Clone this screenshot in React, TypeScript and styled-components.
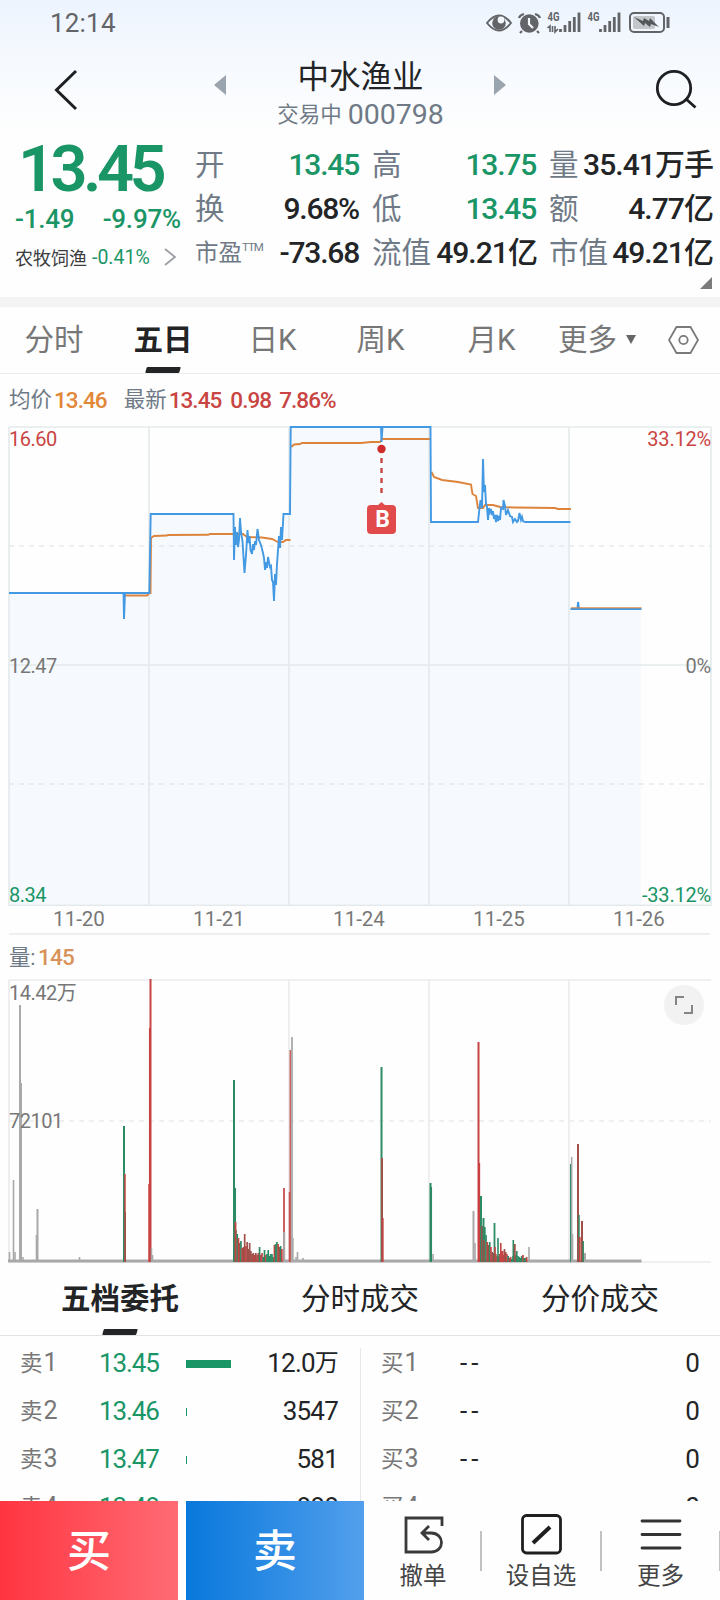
import React from 'react';
import styled, { createGlobalStyle } from 'styled-components';

const GREEN = '#1a9566';
const RED = '#c94543';
const INK = '#222426';
const SLATE = '#6f7a86';
const GREY = '#777777';

const Global = createGlobalStyle`
  * { box-sizing: border-box; }
  html, body { margin: 0; padding: 0; background: #fff; }
  body { width: 720px; height: 1600px; overflow: hidden; font-family: Roboto, "Noto Sans CJK SC", sans-serif; color: ${INK}; }
  svg { display: block; }
`;

const Screen = styled.div`
  width: 720px; height: 1600px; overflow: hidden; background: #fefefe;
  display: flex; flex-direction: column;
`;
const Top = styled.header`
  height: 137px; flex: none; display: flex; flex-direction: column;
  background: linear-gradient(#edf4fe, #f5f9fe 40%, #fefefe);
`;
const StatusBar = styled.div`
  height: 46px; padding: 0 49px 0 50px; display: flex; align-items: center; justify-content: space-between;
`;
const Clock = styled.span`font-size: 26px; line-height: 44px; letter-spacing: 0.2px; color: #626468;`;
const TitleBar = styled.div`
  height: 91px; display: flex; padding: 0 22px 0 54px;
`;
const TitleGroup = styled.div`display: flex; margin-left: 136px; flex: 1;`;
const TitleText = styled.div`
  width: 268px; display: flex; flex-direction: column; align-items: center; padding-left: 1px;
`;
const StockName = styled.h1`
  margin: 12px 0 0; font-size: 31.5px; line-height: 40px; font-weight: 400; white-space: nowrap;
`;
const StockCode = styled.div`
  display: flex; align-items: center; gap: 6px; height: 32px; margin-top: 1px; color: ${SLATE}; white-space: nowrap;
  small { font-size: 21.5px; line-height: 34px; }
  span { font-size: 28.5px; line-height: 32px; }
`;

const Quote = styled.section`
  height: 160px; flex: none; display: flex; padding: 0 7px 0 15px; white-space: nowrap;
`;
const PriceCol = styled.div`width: 180px; color: ${GREEN}; font-weight: 500;`;
const BigPrice = styled.div`
  font-size: 65px; line-height: 64px; font-weight: 600; letter-spacing: -4.6px; height: 65px; padding-left: 3px;
`;
const ChangeRow = styled.div`
  height: 35px; display: flex; width: 166px; justify-content: space-between; font-size: 26px; line-height: 34px;
  letter-spacing: -0.2px;
`;
const Sector = styled.div`
  height: 40px; display: flex; align-items: center; font-size: 18px; color: #3a3c3e; font-weight: 400;
  em { font-style: normal; color: ${GREEN}; font-size: 19.5px; margin: 0 13px 0 5px; }
`;
const Stats = styled.div`
  flex: 1; display: grid; grid-template-columns: 165px 165px 164px; column-gap: 12px;
  grid-template-rows: 44px 44px 44px 18px; padding-top: 6px;
`;
const Stat = styled.div`display: flex; justify-content: space-between; align-items: center;`;
const StatLabel = styled.span<{ $small?: boolean }>`
  font-size: ${p => (p.$small ? 23.5 : 29.5)}px; line-height: 44px; color: ${SLATE}; display: flex;
  sup { font-size: 11.5px; line-height: 32px; vertical-align: top; letter-spacing: -1px; }
`;
const StatValue = styled.span<{ $green?: boolean; $han?: boolean }>`
  font-size: 30px; line-height: 44px; font-weight: 500; letter-spacing: ${p => (p.$han ? -0.95 : -1.2)}px;
  color: ${p => (p.$green ? GREEN : INK)}; padding-right: ${p => (p.$han ? 0 : 1)}px;
`;
const Corner = styled.div`grid-column: 3; display: flex; justify-content: flex-end; padding: 2px 1px 0 0;`;
const Band = styled.div`height: 10px; flex: none; background: #f4f4f4;`;

const Tabs = styled.nav`
  height: 67px; flex: none; display: flex; border-bottom: 1px solid #ececec; white-space: nowrap;
`;
const Tab = styled.div<{ $active?: boolean; $w: number }>`
  width: ${p => p.$w}px; height: 67px; display: flex; flex-direction: column; align-items: center;
  font-size: 29.5px; line-height: 67px; color: ${p => (p.$active ? INK : GREY)};
  font-weight: ${p => (p.$active ? 700 : 400)};
`;
const Marker = styled.i`
  width: 34px; height: 6px; border-radius: 1px; background: ${INK}; transform: skewX(-16deg); margin-top: -7px;
`;
const MoreTab = styled.div`
  flex: none; width: 110px; margin-left: 9px; display: flex; align-items: center; gap: 9px;
  font-size: 29.5px; line-height: 67px; color: ${GREY}; height: 67px;
  svg { margin-top: -3px; }
`;
const HexSlot = styled.div`height: 65px; display: flex; align-items: center;`;

const Legend = styled.div`
  height: 52px; flex: none; display: flex; align-items: center; padding: 0 0 0 9px; white-space: nowrap;
`;
const LegendKey = styled.span`font-size: 21.5px; line-height: 52px; color: ${SLATE};`;
const LegendNum = styled.span<{ $c: string; $gap: number }>`
  font-size: 22.5px; line-height: 50px; font-weight: 500; letter-spacing: -0.95px; color: ${p => p.$c};
  margin-right: ${p => p.$gap}px; margin-left: 2px;
`;

const Plot = styled.div<{ $h: number }>`
  position: relative; height: ${p => p.$h}px; flex: none;
`;
const AxisText = styled.span<{ $y: number; $right?: boolean; $c?: string }>`
  position: absolute; top: ${p => p.$y}px; ${p => (p.$right ? 'right: 9px;' : 'left: 9px;')}
  font-size: 20px; line-height: 24px; letter-spacing: ${p => (p.$right ? -0.2 : -0.5)}px; color: ${p => p.$c || GREY};
`;
const BuyPin = styled.div`
  position: absolute; left: 367px; top: 79px; width: 29px; height: 29px; border-radius: 4px;
  background: #e14b4b; color: #fff; font-size: 23px; line-height: 30px; font-weight: 700; text-align: center; padding-left: 2px;
`;
const Dates = styled.div`
  height: 29px; flex: none; margin: 0 10px 0 9px; display: grid; grid-template-columns: repeat(5, 140px);
  border-bottom: 2px solid #eef0f0; font-size: 20.5px; line-height: 27px; color: ${GREY}; text-align: center;
`;
const VolLegend = styled.div`
  height: 44px; flex: none; display: flex; padding-left: 9px; line-height: 45px; font-size: 21.5px; color: ${SLATE};
  letter-spacing: -0.3px;
  b { font-size: 22.5px; font-weight: 500; color: #d8925a; letter-spacing: -0.9px; margin-left: 3px; }
`;
const Expand = styled.button`
  position: absolute; left: 664px; top: 6px; width: 40px; height: 40px; border: 0; border-radius: 50%;
  padding: 0; background: #f2f2f2; display: flex; align-items: center; justify-content: center;
`;

const DepthTabs = styled.nav`
  height: 73px; flex: none; display: grid; grid-template-columns: repeat(3, 240px); border-bottom: 1px solid #e2e2e2;
`;
const DepthTab = styled.div<{ $active?: boolean }>`
  display: flex; flex-direction: column; align-items: center; font-size: 29.5px; line-height: 73px; height: 73px;
  font-weight: ${p => (p.$active ? 700 : 400)}; color: ${INK};
`;
const Book = styled.section`
  height: 165px; flex: none; display: flex; overflow: hidden; padding-top: 3px;
`;
const Side = styled.div<{ $buy?: boolean }>`
  width: 360px; padding: ${p => (p.$buy ? '0 21px 0 21px' : '0 22px 0 20px')};
`;
const Split = styled.div`width: 1px; margin: 9px -1px 0 0; height: 160px; background: #e8e8e8;`;
const Level = styled.div`display: flex; height: 48px; align-items: center; white-space: nowrap;`;
const LevelName = styled.span`
  width: 79px; color: ${GREY}; font-size: 22.5px; line-height: 48px; display: flex;
  b { font-weight: 400; font-size: 25px; margin-left: 1px; }
`;
const LevelPrice = styled.span<{ $plain?: boolean }>`
  width: 87px; font-size: 26px; line-height: 48px; letter-spacing: ${p => (p.$plain ? 4 : -1.1)}px;
  color: ${p => (p.$plain ? INK : GREEN)};
`;
const LevelBar = styled.i<{ $w: number }>`width: ${p => p.$w}px; height: 8px; background: ${GREEN}; margin-top: 2px;`;
const LevelQty = styled.span`
  margin-left: auto; font-size: 26px; line-height: 48px; letter-spacing: -0.8px; display: flex;
  small { font-size: 24px; }
`;

const Footer = styled.footer`height: 99px; flex: none; display: flex; background: #fefefe;`;
const Trade = styled.button<{ $from: string; $to: string }>`
  flex: none; width: 178px; height: 99px; margin: 0 8px 0 0; padding: 0; border: 0; color: #fff;
  font-family: inherit; font-size: 44px; line-height: 103px; font-weight: 500;
  background: linear-gradient(90deg, ${p => p.$from}, ${p => p.$to});
`;
const Actions = styled.div`flex: none; width: 356px; overflow: hidden; display: flex; margin-left: -8px;`;
const Action = styled.div<{ $w: number; $shift?: number }>`
  flex: none; width: ${p => p.$w}px; display: flex; flex-direction: column; align-items: center;
  padding: 13px 0 0 ${p => p.$shift || 0}px;
  font-size: 23.5px; line-height: 36px; color: #444; white-space: nowrap;
  svg { margin-bottom: 2px; }
`;
const Rule = styled.i`flex: none; width: 2px; height: 40px; margin-top: 30px; background: #c2c2c2;`;

/* Drawings */
const StatusIcons = () => (
  <svg width="185" height="24" viewBox="486 11 185 24" fill="none" stroke="#626468">
    <path d="M487 23Q499 8 511 23Q499 38 487 23Z" strokeWidth="2" />
    <circle cx="499" cy="23" r="6.8" fill="#626468" stroke="none" />
    <circle cx="501" cy="20" r="3.4" fill="#f3f7fe" stroke="none" />
    <circle cx="529.3" cy="23.5" r="9.3" fill="#626468" stroke="none" />
    <path d="M529 18v6l4 4" stroke="#f3f7fe" strokeWidth="2.2" />
    <path d="M519 18q1-3 5-4M535 14q4 1 5 4M522 31l-2 2M537 31l2 2" strokeWidth="2.2" />
    <g fill="#626468" stroke="none" fontFamily="Roboto" fontWeight="700" fontSize="12">
      <text x="547.5" y="21" textLength="12" lengthAdjust="spacingAndGlyphs">4G</text>
      <text x="587.5" y="21" textLength="12" lengthAdjust="spacingAndGlyphs">4G</text>
    </g>
    <path d="M547.500 28l2.500-2v6M552.500 26v6M555 26v6l3-3" strokeWidth="1.600" />
    {[0, 40].map(o => (
      <path key={o} d={`M${560.5 + o} 29v3M${565 + o} 25v7M${569.7 + o} 21v11M${574.3 + o} 17v15M${579 + o} 12.500v19.500`} strokeWidth="2.800" />
    ))}
    <rect x="630" y="13" width="34" height="19" rx="4" strokeWidth="2" />
    <rect x="633" y="16" width="22" height="13" rx="2" fill="#c3c6ca" stroke="none" />
    <path d="M634 17l9 4 1-3 5 3 1-3 9 9-8-3-1 3-5-4-1 3z" fill="#55575a" stroke="none" />
    <path d="M668 17v11" strokeWidth="3" />
  </svg>
);

const BackIcon = () => (
  <svg width="24" height="42" viewBox="0 0 24 42">
    <path d="M22 2L2.500 21L22 40" fill="none" stroke="#1d1f21" strokeWidth="3" />
  </svg>
);
const SearchIcon = () => (
  <svg width="44" height="42" viewBox="0 0 44 42" fill="none" stroke="#1d1f21" strokeWidth="2.800">
    <circle cx="20" cy="20" r="16.700" /><path d="M31.500 30.500L41.500 39.500" />
  </svg>
);
const IconSlot = styled.div<{ $top: number }>`flex: none; padding-top: ${p => p.$top}px;`;

const GRID = [149, 289, 429, 569];
const PRICE_A = '9,593 123.500,593 124,619 125,593 149.300,593 150.700,514 233.500,514 234,560 235,527 236,545 237,532 238,547 239,540 240,518 241,532 242.500,541 244.500,573 246,555 247.500,530 248.500,543 249.500,536 250.500,550 252,554 253,544 254,550 255,541 256,545 257.500,529 259,540 261,545 263,553 264,558 265,570 266,562 267,568 268,557 270,567 271,566 272,580 273,582 274,601 275,574 276,585 277,564 278,550 279,536 280,548 281,527 282,540 283.500,514 290,514 290.700,427 381,427 381.500,442 382.500,427 430.500,427 431,522 478,522 479.500,508 480.500,500 482,508 483,459 484,492 485,485 486,503 487,507 488,520 489,508 490,512 491,509 492,515 493,511 494,519 495,515 496,522 497,515 498,521 499,516 500,520 501,508 503,509 503.500,500 505,506 506,515 508,510 510,516 512,517 513,522 515,519 517,522 518,521 519.500,513 521,520 522,517 523,521 525,522 570.500,522';
const PRICE_B = '570.500,609 577.500,609 578,602 579,609 641.500,609';
const AVERAGES = [
  '124,595.500 147,595.500 149,594',
  '150.500,594 151,538 154,536 167,535.500 168,535 208,534.800 210,534 243,534 247,537 262,537.500 272,539 278,542 283,542 286,540 290.500,540',
  '291.200,447 294,444.500 300,444 302,443 361,443 371,442 380,442 382,439 430,439',
  '431.500,472 434,477 442,480 458,482 471,484.500 472.500,494 476,496 478,508 483,508 485,505 493,505 500,507 515,507.500 555,508 558,509 571,509',
];

const PriceChart = () => (
  <svg width="720" height="480" viewBox="0 426 720 480" fill="none">
    <path d={`M9 906V593L${PRICE_A.slice(6).replace(/ /g, 'L')}V906Z`} fill="#f6faff" />
    <path d="M570 906V609H641V906Z" fill="#f6faff" />
    <g stroke="#e4eaec" strokeWidth="1.700">
      <path d="M9 427H711M9 905.300H711M9 427V906M711 427V906M9 665H711" />
      {GRID.map(x => <path key={x} d={`M${x} 427V906`} />)}
      <path d="M9 546H711M9 784H711" strokeDasharray="5 5" strokeWidth="1.500" />
    </g>
    {AVERAGES.map(p => <polyline key={p} points={p} stroke="#dc843c" strokeWidth="1.900" />)}
    <polyline points={PRICE_A} stroke="#4499e3" strokeWidth="1.900" />
    <polyline points={PRICE_B} stroke="#4499e3" strokeWidth="2" />
    <path d="M571 607.800H641.500" stroke="#dc843c" strokeWidth="1" />
    <circle cx="381.500" cy="449" r="4.200" fill="#d02b2b" />
    <path d="M381.500 458V497" stroke="#c94543" strokeWidth="2.400" strokeDasharray="5 5" />
    <path d="M377 506l4.500-4 4.500 4z" fill="#e14b4b" />
  </svg>
);

type Bar = [number, number, string, number?];
const N = '#a9a9a9';
const G = '#2c8a64';
const R = '#c64342';
const D = '#a04f49';
const BARS: Bar[] = [
  [9.5, 1252, N], [13.5, 1180, N], [15, 1252, N], [20, 1005, N, 2], [21.5, 1083, N, 1], [23, 1257, N],
  [36.5, 1235, N], [37.5, 1209, N, 2], [79.500, 1257, N],
  [124, 1126, G, 2], [125, 1174, R, 1.500], [125.500, 1212, D, 1],
  [149, 1184, R, 1.500], [149.700, 1028, R, 1.500], [150.500, 979, R, 2], [151.500, 1248, N, 1.500], [152.500, 1255, N],
  [234, 1080, G, 2], [235.300, 1188, G, 1.500], [235.500, 1222, R, 1.800],
  [284, 1188, R, 1.700], [284.200, 1232, N, 2], [289.500, 1192, R, 1.500], [290.300, 1050, '#c8605e', 1.600], [292, 1037, N, 1.800], [292.700, 1238, N, 2],
  [296, 1257, N], [297.500, 1252, N], [303, 1258, N],
  [381.500, 1067, G, 2], [382, 1158, D, 2], [383, 1218, R, 1.300],
  [430.500, 1183, G, 2], [431.300, 1187, G, 1.500], [433, 1254, N],
  [473.500, 1211, N, 2], [475, 1243, N],
  [478.500, 1042, R, 2], [479.400, 1163, R, 1.500], [481, 1196, G, 2], [482, 1226, D, 2], [483.500, 1218, G, 2], [484, 1240, D, 1.500],
  [494.500, 1223, G, 1.800], [495, 1247, R], [498, 1238, G], [500.800, 1243, R], [502.500, 1251, R, 2],
  [513.300, 1240, G], [514.800, 1244, D, 1.800], [529, 1247, N],
  [570.700, 1164, G, 1.500], [571.700, 1157, N, 1.500], [572.500, 1234, N],
  [578, 1144, D, 2], [579, 1215, G, 1.500], [579.700, 1237, R, 2], [582, 1221, D, 2], [583.200, 1241, G, 1.500], [585, 1253, N, 2],
];
const CLUSTER_A = [1232, 1236, 1240, 1245, 1243, 1250, 1249, 1236, 1248, 1244, 1251, 1245, 1253, 1256, 1255, 1257, 1255, 1257, 1255, 1249, 1257, 1255, 1259, 1252, 1257, 1256, 1252, 1258, 1256, 1256, 1259, 1247, 1246, 1244, 1246, 1249, 1248, 1251];
const CLUSTER_B = [1228, 1236, 1243, 1246, 1243, 1248, 1253, 1254, 1256, 1255, 1257, 1258, 1255, 1259, 1252, 1256, 1250, 1253, 1255, 1257, 1259, 1258, 1260, 1257, 1260, 1256, 1252, 1257, 1258, 1259, 1257, 1256, 1259, 1259, 1258];
const tone = (i: number) => [G, D, R, G, D, G, R, D][(i * 5 + (i >> 2)) % 8];

const VolumeChart = () => (
  <svg width="720" height="284" viewBox="0 979 720 284" fill="none">
    <g stroke="#ececee" strokeWidth="1.700">
      <path d="M9 980H711M9 980V1262M9 1262H711" />
      {GRID.slice(1).map(x => <path key={x} d={`M${x} 980V1262`} />)}
      <path d="M9 1121H711" strokeDasharray="5 5" />
    </g>
    <path d="M8 1261H641.500" stroke={N} strokeWidth="3" />
    {CLUSTER_A.map((y, i) => <path key={i} d={`M${236 + i * 1.240} ${y - 2}V1262`} stroke={tone(i)} strokeWidth="1.700" />)}
    {CLUSTER_B.map((y, i) => <path key={i} d={`M${484.800 + i * 1.230} ${y - 1}V1262`} stroke={tone(i)} strokeWidth="1.700" />)}
    {BARS.map(([x, y, c, w = 1.6], i) => <path key={i} d={`M${x} ${y}V1262`} stroke={c} strokeWidth={w} />)}
  </svg>
);

const STATS: { label: string; value: string; green?: boolean; ttm?: boolean }[] = [
  { label: '开', value: '13.45', green: true }, { label: '高', value: '13.75', green: true }, { label: '量', value: '35.41万手' },
  { label: '换', value: '9.68%' }, { label: '低', value: '13.45', green: true }, { label: '额', value: '4.77亿' },
  { label: '市盈', value: '-73.68', ttm: true }, { label: '流值', value: '49.21亿' }, { label: '市值', value: '49.21亿' },
];
const SELLS = [
  { n: 1, price: '13.45', w: 45, qty: '12.0', unit: '万' }, { n: 2, price: '13.46', w: 1, qty: '3547' },
  { n: 3, price: '13.47', w: 1, qty: '581' }, { n: 4, price: '13.48', w: 0, qty: '888' },
];

export default function App() {
  return (
    <Screen>
      <Global />
      <Top>
        <StatusBar><Clock>12:14</Clock><StatusIcons /></StatusBar>
        <TitleBar>
          <IconSlot $top={23}><BackIcon /></IconSlot>
          <TitleGroup>
            <IconSlot $top={29}><svg width="12" height="20"><path d="M12 0V20L0 10Z" fill="#9aa4ae" /></svg></IconSlot>
            <TitleText>
              <StockName>中水渔业</StockName>
              <StockCode><small>交易中</small><span>000798</span></StockCode>
            </TitleText>
            <IconSlot $top={29}><svg width="12" height="20"><path d="M0 0V20L12 10Z" fill="#9aa4ae" /></svg></IconSlot>
          </TitleGroup>
          <IconSlot $top={22}><SearchIcon /></IconSlot>
        </TitleBar>
      </Top>
      <Quote>
        <PriceCol>
          <BigPrice>13.45</BigPrice>
          <ChangeRow><span>-1.49</span><span>-9.97%</span></ChangeRow>
          <Sector>农牧饲渔<em>-0.41%</em>
            <svg width="14" height="18" fill="none" stroke="#9b9fa5" strokeWidth="1.8"><path d="M2 1L12 9L2 17" /></svg>
          </Sector>
        </PriceCol>
        <Stats>
          {STATS.map(s => (
            <Stat key={s.label}>
              <StatLabel $small={s.ttm}>{s.label}{s.ttm && <sup>TTM</sup>}</StatLabel>
              <StatValue $green={s.green} $han={/[万亿]/.test(s.value)}>{s.value}</StatValue>
            </Stat>
          ))}
          <Corner><svg width="12" height="12"><path d="M12 0V12H0Z" fill="#7b7b7b" /></svg></Corner>
        </Stats>
      </Quote>
      <Band />
      <Tabs>
        <Tab $w={108}>分时</Tab>
        <Tab $w={110} $active>五日<Marker /></Tab>
        <Tab $w={109}>日K</Tab>
        <Tab $w={107}>周K</Tab>
        <Tab $w={115}>月K</Tab>
        <MoreTab>更多<svg width="10" height="9"><path d="M0 0H10L5 9Z" fill="#666" /></svg></MoreTab>
        <HexSlot>
          <svg width="31" height="28" viewBox="0 0 31 28" fill="none" stroke="#7a7a7a" strokeWidth="1.8"><path d="M8.500 1H22.500L30 14L22.500 27H8.500L1 14Z" /><circle cx="15.500" cy="14" r="4.200" /></svg>
        </HexSlot>
      </Tabs>
      <Legend>
        <LegendKey>均价</LegendKey><LegendNum $c="#e28638" $gap={17}>13.46</LegendNum>
        <LegendKey>最新</LegendKey><LegendNum $c={RED} $gap={7}>13.45</LegendNum>
        <LegendNum $c={RED} $gap={6}>0.98</LegendNum><LegendNum $c={RED} $gap={0}>7.86%</LegendNum>
      </Legend>
      <Plot $h={480}>
        <PriceChart />
        <AxisText $y={1} $c={RED}>16.60</AxisText>
        <AxisText $y={1} $right $c={RED}>33.12%</AxisText>
        <AxisText $y={228}>12.47</AxisText>
        <AxisText $y={228} $right>0%</AxisText>
        <AxisText $y={457} $c={GREEN}>8.34</AxisText>
        <AxisText $y={457} $right $c={GREEN}>-33.12%</AxisText>
        <BuyPin>B</BuyPin>
      </Plot>
      <Dates>{['11-20', '11-21', '11-24', '11-25', '11-26'].map(d => <span key={d}>{d}</span>)}</Dates>
      <VolLegend>量:<b>145</b></VolLegend>
      <Plot $h={284}>
        <VolumeChart />
        <AxisText $y={2}>14.42万</AxisText>
        <AxisText $y={130}>72101</AxisText>
        <Expand><svg width="18" height="18" fill="none" stroke="#858585" strokeWidth="2"><path d="M1 9V1H9M17 9V17H9" /></svg></Expand>
      </Plot>
      <DepthTabs>
        <DepthTab $active>五档委托<Marker /></DepthTab>
        <DepthTab>分时成交</DepthTab>
        <DepthTab>分价成交</DepthTab>
      </DepthTabs>
      <Book>
        <Side>
          {SELLS.map(s => (
            <Level key={s.n}>
              <LevelName>卖<b>{s.n}</b></LevelName><LevelPrice>{s.price}</LevelPrice><LevelBar $w={s.w} />
              <LevelQty>{s.qty}{s.unit && <small>{s.unit}</small>}</LevelQty>
            </Level>
          ))}
        </Side>
        <Split />
        <Side $buy>
          {[1, 2, 3, 4].map(n => (
            <Level key={n}><LevelName>买<b>{n}</b></LevelName><LevelPrice $plain>--</LevelPrice><LevelQty>0</LevelQty></Level>
          ))}
        </Side>
      </Book>
      <Footer>
        <Trade $from="#ff3541" $to="#ff6b74">买</Trade>
        <Trade $from="#0878dc" $to="#529fec">卖</Trade>
        <Actions>
          <Action $w={116} $shift={2}>
            <svg width="42" height="42" viewBox="-2 0 42 42" fill="none" stroke="#3a3a3a" strokeWidth="2.8"><path d="M38 12V4H2V38H27C41 38 41 19 27 19H18M25 12L18 19L25 26" /></svg>
            撤单
          </Action>
          <Rule />
          <Action $w={118}>
            <svg width="42" height="42" fill="none" stroke="#1d1f21" strokeWidth="2.8"><rect x="2.500" y="1.500" width="38" height="37.500" rx="4" /><path d="M13 29L30 13" strokeWidth="4" /></svg>
            设自选
          </Action>
          <Rule />
          <Action $w={117}>
            <svg width="42" height="42" fill="none" stroke="#333" strokeWidth="2.800" strokeLinecap="round"><path d="M2 7H40M2 20.500H40M2 34H40" /></svg>
            更多
          </Action>
          <Rule />
        </Actions>
      </Footer>
    </Screen>
  );
}
